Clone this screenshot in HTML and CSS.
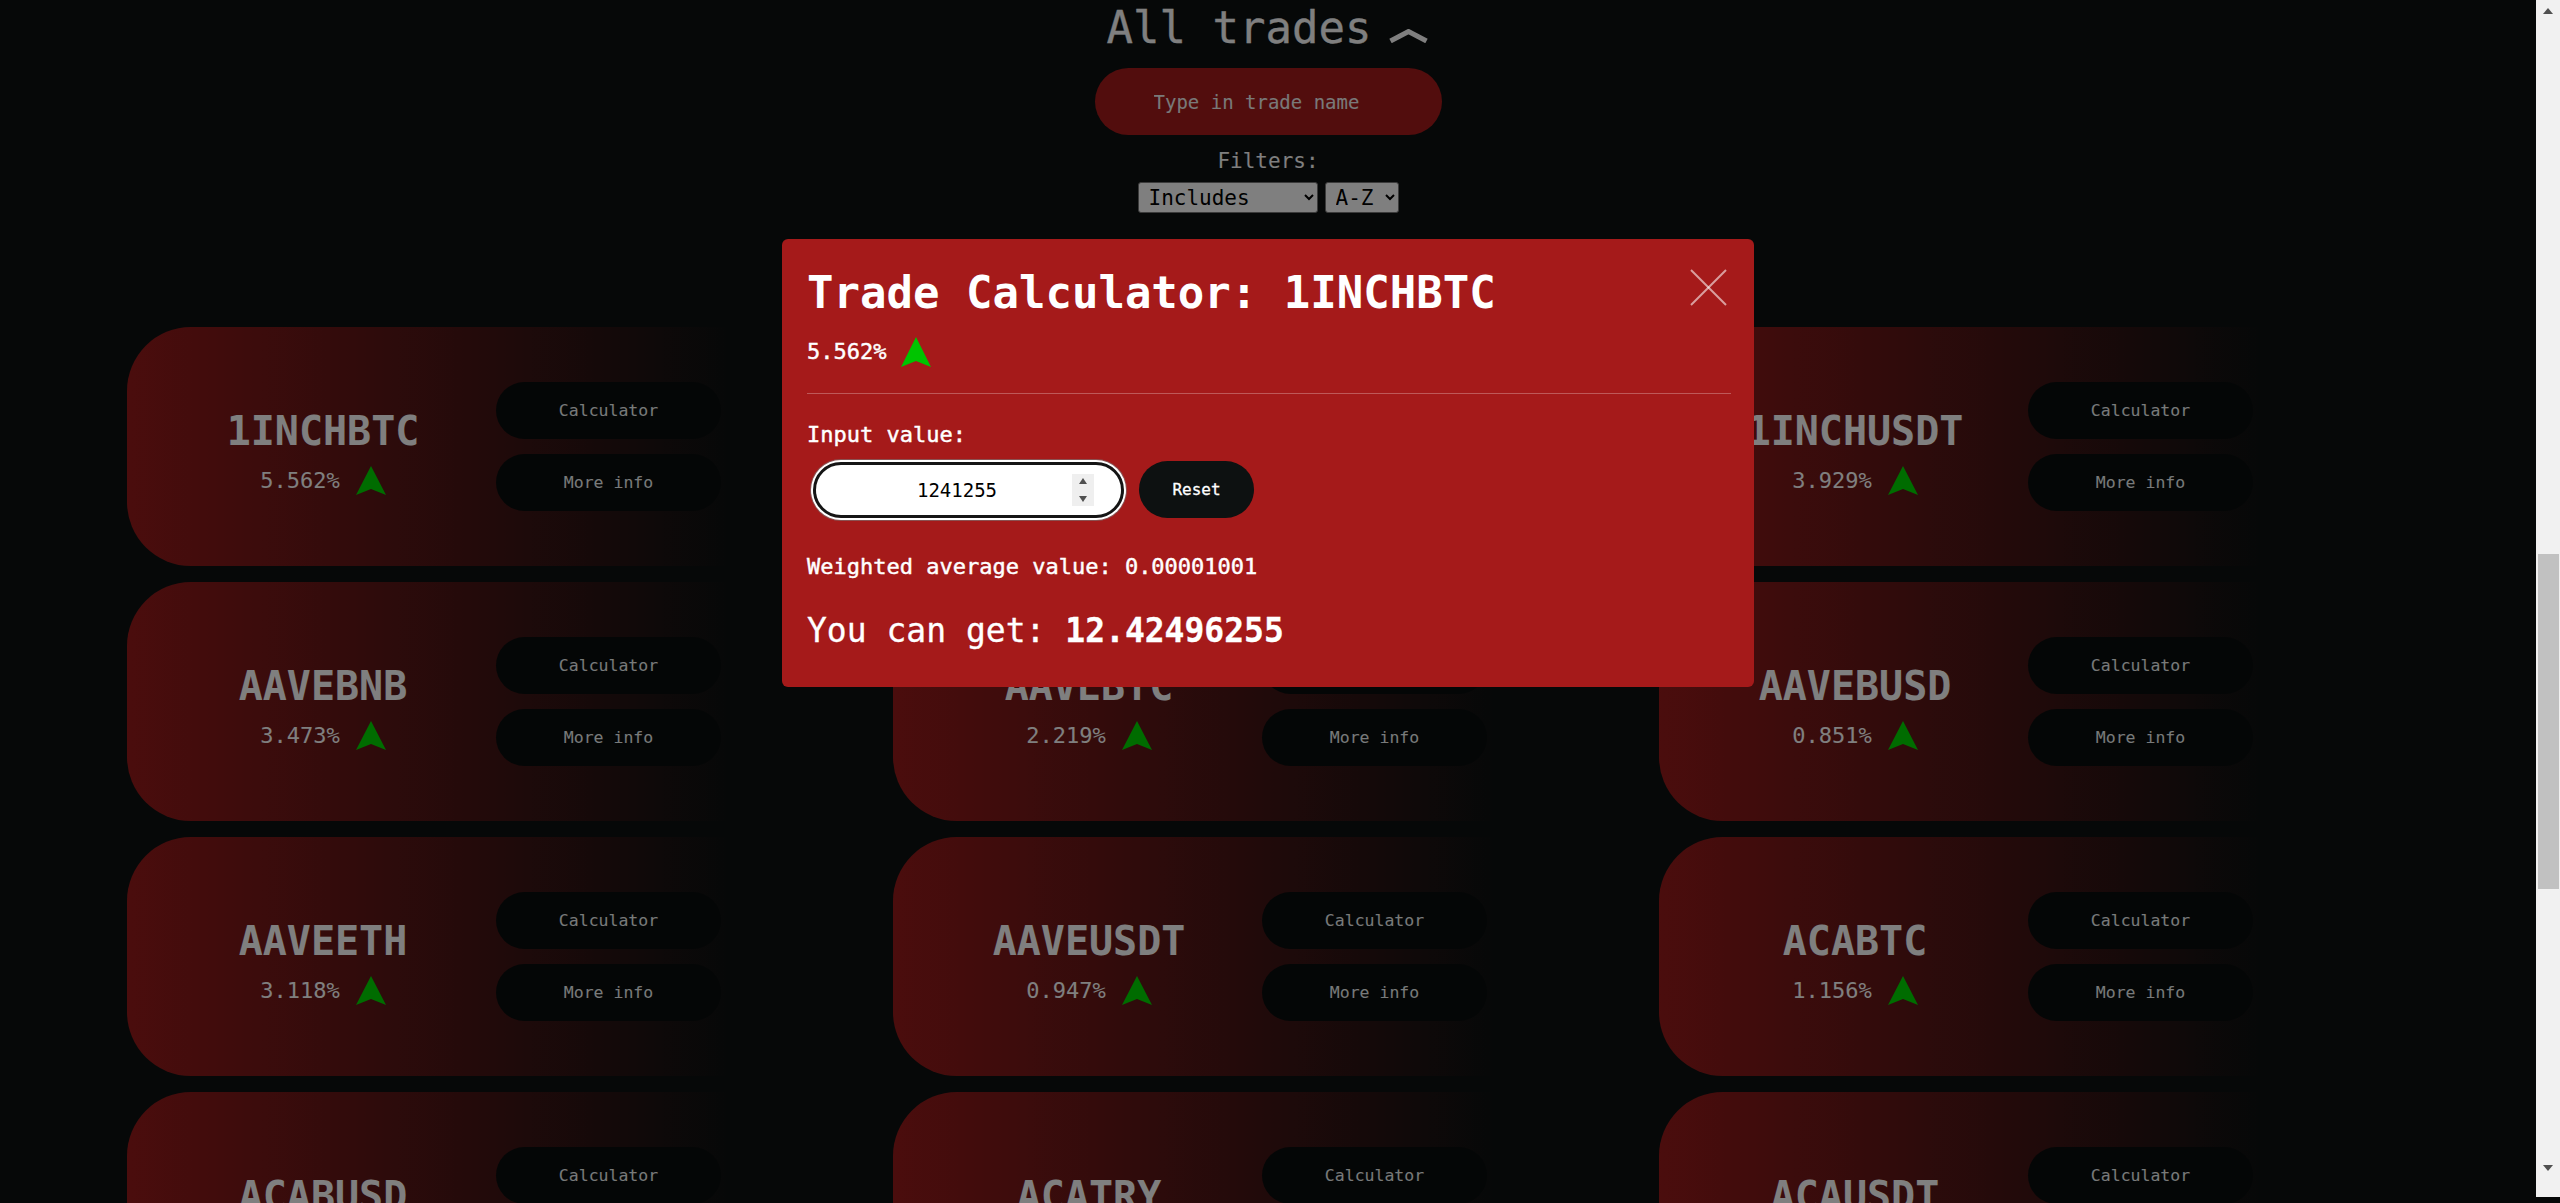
FILE: index.html
```html
<!DOCTYPE html>
<html lang="en">
<head>
<meta charset="utf-8">
<title>All trades</title>
<link rel="stylesheet" href="styles.css">
</head>
<body>
<main class="trades">
  <h2 class="trades-title"><span>All trades</span><svg class="chevron" viewBox="0 0 41 14" width="41" height="14"><polyline points="2.5,12 20.5,2.5 38.5,12"/></svg></h2>
  <input class="search" type="text" placeholder="Type in trade name">
  <div class="filters-label">Filters:</div>
  <div class="filters">
    <select class="sel sel-mode"><option>Includes</option><option>Starts with</option></select>
    <select class="sel sel-sort"><option>A-Z</option><option>Z-A</option></select>
  </div>
  <div class="grid">
    <div class="card"><div class="card-info"><div class="card-name">1INCHBTC</div><div class="card-change"><span>5.562%</span><svg class="arrow" viewBox="0 0 30 29"><polygon points="15,0 30,29 15,23 0,29"/></svg></div></div><div class="card-actions"><button class="card-btn">Calculator</button><button class="card-btn">More info</button></div></div>
    <div class="card"><div class="card-info"><div class="card-name">1INCHBUSD</div><div class="card-change"><span>4.215%</span><svg class="arrow" viewBox="0 0 30 29"><polygon points="15,0 30,29 15,23 0,29"/></svg></div></div><div class="card-actions"><button class="card-btn">Calculator</button><button class="card-btn">More info</button></div></div>
    <div class="card"><div class="card-info"><div class="card-name">1INCHUSDT</div><div class="card-change"><span>3.929%</span><svg class="arrow" viewBox="0 0 30 29"><polygon points="15,0 30,29 15,23 0,29"/></svg></div></div><div class="card-actions"><button class="card-btn">Calculator</button><button class="card-btn">More info</button></div></div>
    <div class="card"><div class="card-info"><div class="card-name">AAVEBNB</div><div class="card-change"><span>3.473%</span><svg class="arrow" viewBox="0 0 30 29"><polygon points="15,0 30,29 15,23 0,29"/></svg></div></div><div class="card-actions"><button class="card-btn">Calculator</button><button class="card-btn">More info</button></div></div>
    <div class="card"><div class="card-info"><div class="card-name">AAVEBTC</div><div class="card-change"><span>2.219%</span><svg class="arrow" viewBox="0 0 30 29"><polygon points="15,0 30,29 15,23 0,29"/></svg></div></div><div class="card-actions"><button class="card-btn">Calculator</button><button class="card-btn">More info</button></div></div>
    <div class="card"><div class="card-info"><div class="card-name">AAVEBUSD</div><div class="card-change"><span>0.851%</span><svg class="arrow" viewBox="0 0 30 29"><polygon points="15,0 30,29 15,23 0,29"/></svg></div></div><div class="card-actions"><button class="card-btn">Calculator</button><button class="card-btn">More info</button></div></div>
    <div class="card"><div class="card-info"><div class="card-name">AAVEETH</div><div class="card-change"><span>3.118%</span><svg class="arrow" viewBox="0 0 30 29"><polygon points="15,0 30,29 15,23 0,29"/></svg></div></div><div class="card-actions"><button class="card-btn">Calculator</button><button class="card-btn">More info</button></div></div>
    <div class="card"><div class="card-info"><div class="card-name">AAVEUSDT</div><div class="card-change"><span>0.947%</span><svg class="arrow" viewBox="0 0 30 29"><polygon points="15,0 30,29 15,23 0,29"/></svg></div></div><div class="card-actions"><button class="card-btn">Calculator</button><button class="card-btn">More info</button></div></div>
    <div class="card"><div class="card-info"><div class="card-name">ACABTC</div><div class="card-change"><span>1.156%</span><svg class="arrow" viewBox="0 0 30 29"><polygon points="15,0 30,29 15,23 0,29"/></svg></div></div><div class="card-actions"><button class="card-btn">Calculator</button><button class="card-btn">More info</button></div></div>
    <div class="card"><div class="card-info"><div class="card-name">ACABUSD</div><div class="card-change"><span>1.044%</span><svg class="arrow" viewBox="0 0 30 29"><polygon points="15,0 30,29 15,23 0,29"/></svg></div></div><div class="card-actions"><button class="card-btn">Calculator</button><button class="card-btn">More info</button></div></div>
    <div class="card"><div class="card-info"><div class="card-name">ACATRY</div><div class="card-change"><span>1.372%</span><svg class="arrow" viewBox="0 0 30 29"><polygon points="15,0 30,29 15,23 0,29"/></svg></div></div><div class="card-actions"><button class="card-btn">Calculator</button><button class="card-btn">More info</button></div></div>
    <div class="card"><div class="card-info"><div class="card-name">ACAUSDT</div><div class="card-change"><span>1.102%</span><svg class="arrow" viewBox="0 0 30 29"><polygon points="15,0 30,29 15,23 0,29"/></svg></div></div><div class="card-actions"><button class="card-btn">Calculator</button><button class="card-btn">More info</button></div></div>
  </div>
</main>
<div class="overlay"></div>
<section class="modal">
  <div class="modal-head">
    <h1 class="modal-title">Trade Calculator: 1INCHBTC</h1>
    <button class="modal-close" aria-label="Close"><svg viewBox="0 0 37 37" width="37" height="37"><line x1="1" y1="1" x2="36" y2="36"/><line x1="36" y1="1" x2="1" y2="36"/></svg></button>
  </div>
  <div class="modal-change"><span>5.562%</span><svg class="arrow arrow-lg" viewBox="0 0 30 30"><polygon points="15,0 30,30 15,24 0,30"/></svg></div>
  <hr class="modal-sep">
  <div class="modal-label">Input value:</div>
  <div class="calc-row">
    <div class="num-field">
      <input class="num-input" type="text" value="1241255">
      <span class="spinner"><svg viewBox="0 0 22 32" width="22" height="32"><polygon points="7,10 15,10 11,4"/><polygon points="7,22 15,22 11,28"/></svg></span>
    </div>
    <button class="reset-btn">Reset</button>
  </div>
  <div class="modal-text">Weighted average value: 0.00001001</div>
  <div class="modal-result">You can get: <strong>12.42496255</strong></div>
</section>
<div class="scrollbar" aria-hidden="true">
  <div class="sb-btn sb-up"><span class="sb-tri-up"></span></div>
  <div class="sb-track"><div class="sb-thumb"></div></div>
  <div class="sb-btn sb-down"><span class="sb-tri-down"></span></div>
</div>
</body>
</html>
```
FILE: styles.css
```css
html {
  background: #0d1111;
}
body {
  margin: 0;
  padding-right: 24px;
  background: #0d1111;
  color: #ffffff;
  font-family: "DejaVu Sans Mono", "Liberation Mono", monospace;
}

.trades {
  display: flex;
  flex-direction: column;
  align-items: center;
  padding-top: 2px;
  padding-bottom: 174px;
}
.trades-title {
  display: flex;
  align-items: flex-start;
  gap: 17px;
  margin: 0;
  font-size: 44px;
  line-height: 52px;
  font-weight: normal;
  color: #ffffff;
  -webkit-text-stroke: 0.3px #ffffff;
}
.chevron {
  margin-top: 27px;
  fill: none;
  stroke: #ffffff;
  stroke-width: 5;
}
.search {
  box-sizing: border-box;
  width: 347px;
  height: 67px;
  margin-top: 14px;
  padding: 0 0 0 59px;
  border: none;
  border-radius: 34px;
  background: #a51b1b;
  color: #ffffff;
  font-family: inherit;
  font-size: 19px;
  outline: none;
}
.search::placeholder {
  color: #f2f2f2;
}
.filters-label {
  margin-top: 14px;
  font-size: 21px;
  line-height: 24px;
}
.filters {
  display: flex;
  gap: 7px;
  margin-top: 9px;
}
.sel {
  box-sizing: border-box;
  height: 31px;
  padding: 0 2px 0 6px;
  border: 1px solid #767676;
  border-radius: 3px;
  background-color: #ffffff;
  color: #000000;
  font-family: inherit;
  font-size: 21px;
}
.sel-mode {
  width: 180px;
}
.sel-sort {
  width: 74px;
}

.grid {
  display: grid;
  grid-template-columns: repeat(3, 750px);
  grid-auto-rows: 239px;
  column-gap: 16px;
  row-gap: 16px;
  justify-content: center;
  margin-top: 114px;
  align-self: stretch;
}
.card {
  display: flex;
  align-items: center;
  border-radius: 64px;
  background: linear-gradient(to right, #961a1a 0%, #0d1111 80%);
}
.card-info {
  box-sizing: border-box;
  width: 369px;
  padding-left: 23px;
  margin-top: 9px;
  display: flex;
  flex-direction: column;
  align-items: center;
}
.card-name {
  font-size: 40px;
  line-height: 48px;
  font-weight: bold;
  color: #ffffff;
}
.card-change {
  display: flex;
  align-items: center;
  gap: 16px;
  height: 30px;
  margin-top: 11px;
  font-size: 22px;
  line-height: 30px;
}
.arrow {
  width: 30px;
  height: 29px;
  fill: #00d800;
}
.card-actions {
  display: flex;
  flex-direction: column;
  gap: 15px;
}
.card-btn {
  width: 225px;
  height: 57px;
  border: none;
  border-radius: 29px;
  background: #090d0d;
  color: #f0f4f4;
  font-family: inherit;
  font-size: 16.5px;
  padding: 0;
}

.overlay {
  position: fixed;
  inset: 0;
  background: rgba(0, 0, 0, 0.5);
}
.modal {
  position: fixed;
  top: 239px;
  left: 782px;
  width: 972px;
  box-sizing: border-box;
  padding: 28px 23px 36px 25px;
  border-radius: 6px;
  background: #a51a1a;
  color: #ffffff;
}
.modal-head {
  display: flex;
  justify-content: space-between;
  align-items: flex-start;
}
.modal-title {
  margin: 0;
  font-size: 44px;
  line-height: 52px;
  font-weight: bold;
}
.modal-close {
  width: 37px;
  height: 37px;
  margin: 2px 4px 0 0;
  padding: 0;
  border: none;
  background: none;
}
.modal-close svg {
  display: block;
  stroke: rgba(255, 255, 255, 0.58);
  stroke-width: 2;
}
.modal-change {
  display: flex;
  align-items: center;
  gap: 15px;
  height: 30px;
  margin-top: 18px;
  font-size: 22px;
  line-height: 30px;
  -webkit-text-stroke: 0.45px #ffffff;
}
.arrow-lg {
  height: 30px;
  fill: #00c400;
}
.modal-sep {
  margin: 26px 0 0;
  height: 0;
  border: none;
  border-top: 1px solid rgba(255, 255, 255, 0.28);
}
.modal-label {
  margin-top: 26px;
  font-size: 22px;
  line-height: 30px;
  -webkit-text-stroke: 0.45px #ffffff;
}
.calc-row {
  display: flex;
  align-items: center;
  gap: 15px;
  height: 57px;
  margin-top: 11px;
  padding-left: 6px;
}
.num-field {
  box-sizing: border-box;
  display: flex;
  align-items: center;
  width: 311px;
  height: 56px;
  border: 3px solid #151515;
  border-radius: 28px;
  background: #ffffff;
  box-shadow: 0 0 0 2px #ffffff, 0 0 0 3px rgba(120, 120, 120, 0.6);
}
.num-input {
  flex: 1;
  min-width: 0;
  padding: 0 0 0 26px;
  border: none;
  outline: none;
  background: transparent;
  color: #000000;
  font-family: inherit;
  font-size: 19px;
  text-align: center;
}
.spinner {
  display: flex;
  width: 22px;
  height: 32px;
  margin-right: 27px;
  background: #efefef;
}
.spinner svg {
  fill: #505050;
}
.reset-btn {
  width: 115px;
  height: 57px;
  padding: 0;
  border: none;
  border-radius: 29px;
  background: #0d1111;
  color: #ffffff;
  font-family: inherit;
  font-size: 16px;
  -webkit-text-stroke: 0.3px #ffffff;
}
.modal-text {
  margin-top: 34px;
  font-size: 22px;
  line-height: 30px;
  -webkit-text-stroke: 0.45px #ffffff;
}
.modal-result {
  margin-top: 29px;
  font-size: 33px;
  line-height: 40px;
  -webkit-text-stroke: 0.3px #ffffff;
}
.modal-result strong {
  font-weight: bold;
}

.scrollbar {
  position: fixed;
  top: 0;
  right: 0;
  width: 24px;
  height: 1197px;
  display: flex;
  flex-direction: column;
  background: #f1f1f1;
}
.sb-btn {
  display: flex;
  align-items: center;
  justify-content: center;
}
.sb-up {
  height: 22px;
}
.sb-down {
  height: 58px;
}
.sb-track {
  flex: 1;
  padding: 532px 1px 0 2px;
}
.sb-thumb {
  height: 335px;
  background: #c1c1c1;
}
.sb-tri-up {
  width: 0;
  height: 0;
  border-left: 5px solid transparent;
  border-right: 5px solid transparent;
  border-bottom: 6px solid #505050;
}
.sb-tri-down {
  width: 0;
  height: 0;
  border-left: 5px solid transparent;
  border-right: 5px solid transparent;
  border-top: 6px solid #505050;
}
```
